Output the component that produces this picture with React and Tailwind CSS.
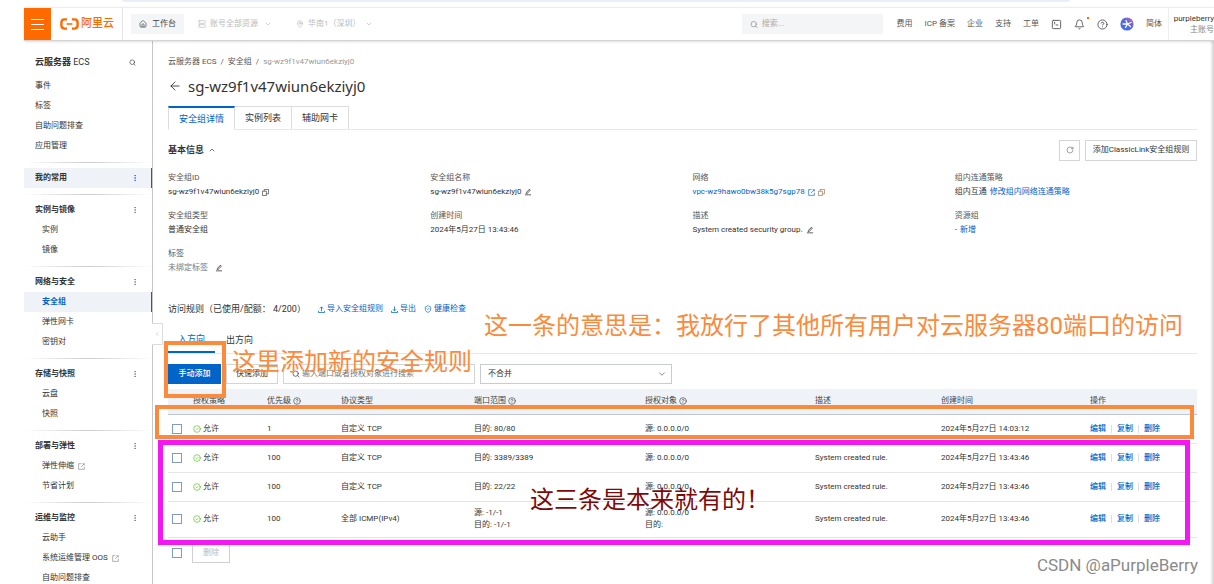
import React, { useState } from "react";
import {
  ArrowLeft,
  Bell,
  ChevronDown,
  ChevronLeft,
  ChevronUp,
  CircleCheck,
  CircleHelp,
  EllipsisVertical,
  House,
  MapPin,
  RotateCw,
  Search,
  Server,
  ShieldCheck,
  SquareTerminal,
} from "lucide-react";
import { AiOutlineEdit } from "react-icons/ai";

const topLinks = ["费用", "ICP 备案", "企业", "支持", "工单"];

const quickLinks = ["事件", "标签", "自助问题排查", "应用管理"];

const menuGroups = [
  { title: "我的常用", active: true, items: [] },
  { title: "实例与镜像", items: [{ label: "实例" }, { label: "镜像" }] },
  {
    title: "网络与安全",
    items: [{ label: "安全组", active: true }, { label: "弹性网卡" }, { label: "密钥对" }],
  },
  { title: "存储与快照", items: [{ label: "云盘" }, { label: "快照" }] },
  { title: "部署与弹性", items: [{ label: "弹性伸缩", external: true }, { label: "节省计划" }] },
  {
    title: "运维与监控",
    items: [
      { label: "云助手" },
      { label: "系统运维管理 OOS", external: true },
      { label: "自助问题排查" },
    ],
  },
];

const columns = [
  { label: "授权策略", width: "w-[74px]" },
  { label: "优先级", width: "w-[74px]", help: true },
  { label: "协议类型", width: "w-[133px]" },
  { label: "端口范围", width: "w-[171px]", help: true },
  { label: "授权对象", width: "w-[170px]", help: true },
  { label: "描述", width: "w-[126px]" },
  { label: "创建时间", width: "w-[149px]" },
  { label: "操作", width: "" },
];

const rules = [
  {
    id: 1,
    priority: 1,
    protocol: "自定义 TCP",
    ports: ["目的: 80/80"],
    sources: ["源: 0.0.0.0/0"],
    description: "",
    created: "2024年5月27日 14:03:12",
  },
  {
    id: 2,
    priority: 100,
    protocol: "自定义 TCP",
    ports: ["目的: 3389/3389"],
    sources: ["源: 0.0.0.0/0"],
    description: "System created rule.",
    created: "2024年5月27日 13:43:46",
  },
  {
    id: 3,
    priority: 100,
    protocol: "自定义 TCP",
    ports: ["目的: 22/22"],
    sources: ["源: 0.0.0.0/0"],
    description: "System created rule.",
    created: "2024年5月27日 13:43:46",
  },
  {
    id: 4,
    priority: 100,
    protocol: "全部 ICMP(IPv4)",
    ports: ["源: -1/-1", "目的: -1/-1"],
    sources: ["源: 0.0.0.0/0", "目的:"],
    description: "System created rule.",
    created: "2024年5月27日 13:43:46",
    tall: true,
  },
];

const CopyIcon = ({ className }) => (
  <svg viewBox="0 0 16 16" fill="none" stroke="currentColor" strokeWidth="1.5" className={className}>
    <path d="M1 5h9v10H1z" />
    <path d="M5 5V1h10v10h-5" />
  </svg>
);

const LinkIcon = ({ className }) => (
  <svg viewBox="0 0 16 16" fill="none" stroke="currentColor" strokeWidth="1.5" className={className}>
    <path d="M8 1.5H1.5v13h13V8.5" />
    <path d="M7 9l7-7M10.5 1.5h4v4" />
  </svg>
);

const TrayIcon = ({ down, className }) => (
  <svg viewBox="0 0 16 16" fill="none" stroke="currentColor" strokeWidth="1.8" className={className}>
    <path d="M1 11v4h14v-4" />
    <path d={down ? "M8 1v10M4.5 7.5 8 11l3.5-3.5" : "M8 12V2M4.5 5.5 8 2l3.5 3.5"} />
  </svg>
);

const Logo = () => (
  <a href="#home" className="flex items-center gap-[2px] text-[#ff6a00]">
    <svg viewBox="0 0 19 12" className="h-3 w-[19px]" fill="none" stroke="currentColor" strokeWidth="2.4">
      <path d="M7 1.4H4.4Q1.4 1.6 1.4 4.4v3.2q0 2.8 3 3H7" />
      <path d="M12 1.4h2.6q3 .2 3 3v3.2q0 2.8-3 3H12" />
      <path d="M6.6 6h5.8" strokeWidth="1.6" />
    </svg>
    <span className="text-[11px] font-medium">阿里云</span>
  </a>
);

const AssistantIcon = () => (
  <svg viewBox="0 0 14 14" className="size-[14px]">
    <defs>
      <linearGradient id="assistant" x1="1" y1="0" x2="0" y2="1">
        <stop offset="0" stopColor="#f06a8a" />
        <stop offset="0.4" stopColor="#5b66e0" />
        <stop offset="1" stopColor="#3a6ff0" />
      </linearGradient>
    </defs>
    <circle cx="7" cy="7" r="6.6" fill="url(#assistant)" />
    <path
      d="M3 7h4.5M7.5 7l3.5-1.5M7.5 7l3 2.5M7.5 7 6 3.5M7.5 7 5.5 10.5"
      stroke="#fff"
      strokeWidth="1.3"
      strokeLinecap="round"
    />
  </svg>
);

const TopBar = () => (
  <header className="relative z-10 ml-6 flex h-[34px] shrink-0 items-center border-t border-b border-t-[#eeeeee] border-b-[#d4d4d4] bg-white text-[8px] text-[#555] shadow-sm">
    <button aria-label="菜单" className="flex h-full w-[27px] items-center justify-center bg-[#ff6a00]">
      <svg viewBox="0 0 13 11" className="h-[11px] w-[13px]" stroke="#fff" strokeWidth="1">
        <path d="M0 .5h13M0 5.5h13M0 10.5h13" />
      </svg>
    </button>
    <div className="flex h-full items-center border-r border-[#e5e5e5] pr-2 pl-[9px]">
      <Logo />
    </div>
    <button className="ml-2 flex h-5 items-center gap-[5px] bg-[#f4f5f7] px-2 text-[#444]">
      <House className="size-2" />
      工作台
    </button>
    <button className="ml-[14px] flex items-center gap-1 text-[#bbb]">
      <Server className="size-2" />
      账号全部资源
      <ChevronDown className="ml-[2px] size-2" />
    </button>
    <button className="ml-6 flex items-center gap-1 text-[#bbb]">
      <MapPin className="size-2" />
      华南1（深圳）
      <ChevronDown className="size-2" />
    </button>

    <div className="ml-auto flex h-full shrink-0 items-center">
      <label className="mr-[14px] flex h-5 w-[141px] items-center gap-1 bg-[#f4f5f7] px-2">
        <Search className="size-[9px] text-[#888]" />
        <input aria-label="搜索" placeholder="搜索..." className="w-full bg-transparent outline-none placeholder:text-[#aaa]" />
      </label>
      <nav className="flex items-center gap-3">
        {topLinks.map((l) => (
          <a key={l} href="#top">{l}</a>
        ))}
        <button aria-label="终端"><SquareTerminal className="size-[11px]" /></button>
        <button aria-label="通知" className="relative">
          <Bell className="size-[11px]" />
          <span className="absolute -top-[2px] -right-1 size-[2px] bg-[#ff6a00]" />
        </button>
        <button aria-label="帮助"><CircleHelp className="size-[11px]" /></button>
        <button aria-label="助手"><AssistantIcon /></button>
        <a href="#lang">简体</a>
      </nav>
      <div className="ml-[6px] flex h-full w-[46px] flex-col items-end justify-center border-l border-[#eee] leading-[11px]">
        <span className="text-[#333]">purpleberry</span>
        <span className="text-[#888]">主账号</span>
      </div>
    </div>
  </header>
);

const Sidebar = () => (
  <aside className="relative ml-6 w-[129px] shrink-0 border-r border-[#c8c8c8] text-[8px] text-[#333]">
    <div className="h-full overflow-hidden pt-[11px]">
      <div className="mb-1 flex h-5 items-center justify-between pr-4 pl-[11px] text-[9px] font-semibold">
        <span>云服务器 <span className="font-normal">ECS</span></span>
        <button aria-label="搜索"><Search className="size-[7px]" /></button>
      </div>
      {quickLinks.map((l) => (
        <a key={l} href="#menu" className="flex h-5 items-center pl-[11px]">{l}</a>
      ))}
      {menuGroups.map((g) => (
        <div key={g.title}>
          <div className="flex h-3 items-center">
            <div className="h-px w-full bg-linear-to-r from-transparent via-[#ccc] to-transparent" />
          </div>
          <div
            className={
              g.active
                ? "flex h-5 items-center justify-between border-r border-[#0064c8] bg-[#eff3f8] pr-3 pl-[11px] font-semibold"
                : "flex h-5 items-center justify-between pr-[13px] pl-[11px] font-semibold"
            }
          >
            {g.title}
            <button aria-label={`${g.title}更多`}>
              <EllipsisVertical className={g.active ? "size-2 text-[#0064c8]" : "size-2 text-[#666]"} />
            </button>
          </div>
          {g.items.map((item) => (
            <a
              key={item.label}
              href="#menu"
              className={
                item.active
                  ? "flex h-5 items-center border-r border-[#0064c8] bg-[#eff3f8] pl-[18px] font-semibold text-[#0064c8]"
                  : "flex h-5 items-center pl-[18px]"
              }
            >
              {item.label}
              {item.external && <LinkIcon className="ml-1 size-[7px] text-[#888]" />}
            </a>
          ))}
        </div>
      ))}
    </div>
    <button
      aria-label="收起"
      className="absolute top-[282px] -right-[11px] z-10 flex h-[22px] w-[11px] items-center justify-center border border-l-0 border-[#ddd] bg-white text-[#aaa]"
    >
      <ChevronLeft className="size-[6px]" />
    </button>
  </aside>
);

const Field = ({ label, children }) => (
  <div className="leading-[14px]">
    <dt className="text-[#555]">{label}</dt>
    <dd className="flex items-center gap-[3px] text-[#333]">{children}</dd>
  </div>
);

const BasicInfo = () => (
  <section>
    <div className="mt-[10px] flex h-5 items-center gap-[5px]">
      <h2 className="flex items-center gap-1 text-[9px] font-semibold">
        基本信息
        <ChevronUp className="size-2" />
      </h2>
      <button aria-label="刷新" className="ml-auto flex h-[21px] w-[21px] items-center justify-center border border-[#d5d5d5]">
        <RotateCw className="size-2 text-[#777]" />
      </button>
      <button className="h-[21px] w-28 border border-[#d5d5d5]">添加ClassicLink安全组规则</button>
    </div>
    <dl className="mt-[11px] grid grid-cols-4 gap-x-5 gap-y-[10px]">
      <Field label="安全组ID">
        sg-wz9f1v47wiun6ekziyj0
        <CopyIcon className="size-[7px]" />
      </Field>
      <Field label="安全组名称">
        sg-wz9f1v47wiun6ekziyj0
        <AiOutlineEdit className="size-2" />
      </Field>
      <Field label="网络">
        <a href="#vpc" className="text-[#0064c8]">vpc-wz9hawo0bw38k5g7sgp78</a>
        <LinkIcon className="size-[7px] text-[#0064c8]" />
        <CopyIcon className="size-[7px] text-[#9a6a3a]" />
      </Field>
      <Field label="组内连通策略">
        组内互通
        <a href="#policy" className="text-[#0064c8]">修改组内网络连通策略</a>
      </Field>
      <Field label="安全组类型">普通安全组</Field>
      <Field label="创建时间">2024年5月27日 13:43:46</Field>
      <Field label="描述">
        System created security group.
        <AiOutlineEdit className="size-2" />
      </Field>
      <Field label="资源组">
        - <a href="#group" className="text-[#0064c8]">新增</a>
      </Field>
      <Field label="标签">
        <span className="text-[#777]">未绑定标签</span>
        <AiOutlineEdit className="ml-1 size-2" />
      </Field>
    </dl>
  </section>
);

const Checkbox = ({ label }) => (
  <input
    type="checkbox"
    aria-label={label}
    className="block size-[10px] appearance-none border border-[#7f9cba] bg-white checked:bg-[#0064c8]"
  />
);

const RuleTable = () => (
  <table className="mt-[5px] w-full table-fixed text-left">
    <thead>
      <tr className="h-[25px] border-b border-[#c0c6cf] bg-[#eff3f8]">
        <th className="w-[25px]" />
        {columns.map((c) => (
          <th key={c.label} className={`${c.width} font-normal text-[#444]`}>
            <span className="flex items-center gap-[2px]">
              {c.label}
              {c.help && <CircleHelp className="size-2" />}
            </span>
          </th>
        ))}
      </tr>
    </thead>
    <tbody>
      {rules.map((r) => (
        <tr key={r.id} className={r.tall ? "h-9 border-b border-[#e5e5e5]" : "h-[29px] border-b border-[#e5e5e5]"}>
          <td className="pl-1"><Checkbox label={`选择规则 ${r.id}`} /></td>
          <td>
            <span className="flex items-center gap-[2px]">
              <CircleCheck className="size-2 text-[#52c41a]" />
              允许
            </span>
          </td>
          <td>{r.priority}</td>
          <td>{r.protocol}</td>
          <td>{r.ports.map((p) => <div key={p}>{p}</div>)}</td>
          <td>{r.sources.map((s) => <div key={s}>{s}</div>)}</td>
          <td>{r.description}</td>
          <td>{r.created}</td>
          <td>
            <span className="flex items-center gap-[5px] font-medium text-[#0064c8]">
              <a href="#edit">编辑</a>
              <span className="h-2 w-px bg-[#ddd]" />
              <a href="#copy">复制</a>
              <span className="h-2 w-px bg-[#ddd]" />
              <a href="#delete">删除</a>
            </span>
          </td>
        </tr>
      ))}
    </tbody>
  </table>
);

const AccessRules = () => {
  const [merge, setMerge] = useState("none");

  return (
    <section className="mt-6">
      <div className="flex h-5 items-center text-[#0064c8]">
        <h2 className="mr-3 text-[9px] text-[#333]">访问规则（已使用/配额： 4/200）</h2>
        <button className="mr-2 flex items-center gap-[2px]"><TrayIcon className="size-[7px]" />导入安全组规则</button>
        <button className="mr-2 flex items-center gap-[2px]"><TrayIcon down className="size-[7px]" />导出</button>
        <button className="flex items-center gap-[2px]"><ShieldCheck className="size-2" />健康检查</button>
      </div>
      <div className="mt-2 flex h-[27px] border-b border-[#e8e8e8] text-[9px]">
        <button className="border-b-2 border-[#0064c8] px-[10px] text-[#0064c8]">入方向</button>
        <button className="px-[11px]">出方向</button>
      </div>
      <div className="mt-[10px] flex h-5 gap-[5px]">
        <button className="w-[53px] bg-[#0064c8] font-medium text-white">手动添加</button>
        <button className="w-[52px] border border-[#d5d5d5]">快速添加</button>
        <label className="flex w-48 items-center gap-[2px] border border-[#d5d5d5] px-2">
          <Search className="size-2 shrink-0" />
          <input aria-label="搜索规则" placeholder="输入端口或者授权对象进行搜索" className="w-full outline-none placeholder:text-[#777]" />
        </label>
        <div className="relative">
          <select
            aria-label="合并方式"
            value={merge}
            onChange={(e) => setMerge(e.target.value)}
            className="h-full w-48 appearance-none border border-[#c8ccd2] bg-white px-[7px]"
          >
            <option value="none">不合并</option>
            <option value="port">按端口合并</option>
          </select>
          <ChevronDown className="pointer-events-none absolute top-[5px] right-[5px] size-[10px] text-[#777]" />
        </div>
      </div>
      <RuleTable />
      <div className="mt-[5px] flex items-center gap-[10px] pl-1">
        <Checkbox label="全选" />
        <button disabled className="h-5 w-[38px] border border-[#d0d0d0] text-[#bbb]">删除</button>
      </div>
    </section>
  );
};

// Marks drawn over the console, placed against the main area
const Notes = () => (
  <div className="pointer-events-none absolute inset-0 z-20 text-[24px] leading-[30px] whitespace-nowrap">
    <div className="absolute top-[300px] left-[11px] h-[57px] w-[62px] border-4 border-[#fb8a3c]" />
    <div className="absolute top-[364px] right-4 left-[2px] h-[34px] border-4 border-[#fb8a3c]" />
    <div className="absolute top-[399px] right-5 left-[5px] h-[105px] border-[5px] border-[#f318f3]" />
    <p className="absolute top-[270px] left-[331px] text-[#fb8a3c]">这一条的意思是：我放行了其他所有用户对云服务器80端口的访问</p>
    <p className="absolute top-[306px] left-[79px] text-[#fb8a3c]">这里添加新的安全规则</p>
    <p className="absolute top-[444px] left-[377px] text-[#7d0a0a]">这三条是本来就有的！</p>
    <p className="absolute right-3 bottom-1 text-[17px] text-[#8a8a8a]">CSDN @aPurpleBerry</p>
  </div>
);

const App = () => (
  <div className="flex h-screen flex-col overflow-hidden bg-white font-['Roboto','Noto_Sans_CJK_SC',sans-serif] text-[8px] leading-[12px] text-[#333]">
    <div className="mr-36 mb-[5px] ml-[122px] h-[2px] shrink-0 rounded-b-sm bg-[#e9eef8]" />
    <TopBar />
    <div className="flex min-h-0 flex-1">
      <Sidebar />
      <div className="relative min-w-0 flex-1">
        <main className="h-full overflow-hidden pr-[13px] pl-[15px]">
          <nav aria-label="路径" className="mt-[15px] flex gap-1 text-[#555]">
            <a href="#ecs">云服务器 ECS</a>
            <span>/</span>
            <a href="#groups">安全组</a>
            <span>/</span>
            <span className="text-[#999]">sg-wz9f1v47wiun6ekziyj0</span>
          </nav>
          <div className="mt-2 flex h-5 items-center gap-[6px]">
            <button aria-label="返回"><ArrowLeft className="size-[14px]" strokeWidth={1.5} /></button>
            <h1 className="font-['Noto_Sans',sans-serif] text-[15px]">sg-wz9f1v47wiun6ekziyj0</h1>
          </div>
          <div className="mt-[10px] flex h-6 border-b border-[#e8e8e8] text-[9px]">
            <button className="-mb-px border border-t-2 border-[#ddd] border-t-[#0064c8] border-b-white bg-white px-[10px] text-[#0064c8]">安全组详情</button>
            <button className="border-t border-r border-[#ddd] px-[10px]">实例列表</button>
            <button className="border-t border-r border-[#ddd] px-[10px]">辅助网卡</button>
          </div>
          <BasicInfo />
          <AccessRules />
        </main>
        <Notes />
      </div>
      <div className="w-1 shrink-0 bg-linear-to-r from-white to-[#d0d0d0]" />
    </div>
  </div>
);

export default App;
